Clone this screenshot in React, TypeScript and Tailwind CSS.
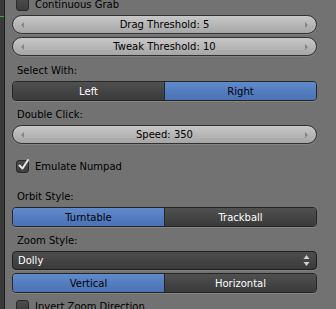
import React from 'react'

const FONT = "font-['DejaVu_Sans','Liberation_Sans',sans-serif]"

function Arrow({ dir }: { dir: 'l' | 'r' }) {
  return dir === 'l' ? (
    <div className="w-0 h-0 border-y-[3px] border-y-transparent border-r-[3px] border-r-[#858585]" />
  ) : (
    <div className="w-0 h-0 border-y-[3px] border-y-transparent border-l-[3px] border-l-[#858585]" />
  )
}

function Slider({ label, className = '' }: { label: string; className?: string }) {
  return (
    <div
      className={`shrink-0 h-[19px] flex items-center px-[8px] rounded-full border border-[#303030] bg-gradient-to-b from-[#c8c8c8] to-[#a6a6a6] shadow-[0_1px_0_rgba(255,255,255,0.12)] text-black ${className}`}
    >
      <Arrow dir="l" />
      <span className="flex-1 text-center leading-none">{label}</span>
      <Arrow dir="r" />
    </div>
  )
}

function Label({ text, className = '' }: { text: string; className?: string }) {
  return (
    <div className={`shrink-0 h-[20px] flex items-center pl-[5px] text-black ${className}`}>{text}</div>
  )
}

function Check({ checked }: { checked?: boolean }) {
  return (
    <div className="relative w-[13px] h-[13px] rounded-[3px] border border-[#2a2a2a] bg-gradient-to-b from-[#4c4c4c] to-[#3c3c3c]">
      {checked && (
        <svg className="absolute left-[1px] top-[-3px]" width="12" height="13" viewBox="0 0 12 13">
          <path d="M1.5 7.5 L4.5 10.5 L10 2" fill="none" stroke="#e6e6e6" strokeWidth="2" strokeLinecap="round" strokeLinejoin="round" />
        </svg>
      )}
    </div>
  )
}

function CheckRow({ label, checked, className = '' }: { label: string; checked?: boolean; className?: string }) {
  return (
    <div className={`shrink-0 h-[20px] flex items-center gap-[6px] pl-[4px] text-black ${className}`}>
      <Check checked={checked} />
      <span>{label}</span>
    </div>
  )
}

function Toggle({ left, right, active, className = '' }: { left: string; right: string; active: 0 | 1; className?: string }) {
  const on = 'bg-gradient-to-b from-[#5f8acb] to-[#4a72b5] text-black'
  const off = 'bg-gradient-to-b from-[#505050] to-[#3a3a3a] text-white'
  return (
    <div className={`shrink-0 h-[20px] flex rounded-[4px] border border-[#262626] overflow-hidden shadow-[0_1px_0_rgba(255,255,255,0.12)] ${className}`}>
      <div className={`flex-1 flex items-center justify-center border-r border-[#262626] ${active === 0 ? on : off}`}>{left}</div>
      <div className={`flex-1 flex items-center justify-center ${active === 1 ? on : off}`}>{right}</div>
    </div>
  )
}

function Dropdown({ value, className = '' }: { value: string; className?: string }) {
  return (
    <div className={`shrink-0 h-[19px] flex items-center pl-[5px] pr-[6px] rounded-[4px] border border-[#1e1e1e] bg-gradient-to-b from-[#4e4e4e] to-[#3a3a3a] text-white shadow-[0_1px_0_rgba(255,255,255,0.12)] ${className}`}>
      <span className="flex-1">{value}</span>
      <svg width="7" height="13" viewBox="0 0 7 13">
        <path d="M0.5 5 L3.5 1 L6.5 5 Z" fill="#d2d2d2" />
        <path d="M0.5 8 L3.5 12 L6.5 8 Z" fill="#d2d2d2" />
      </svg>
    </div>
  )
}

export default function App() {
  return (
    <div className={`w-[336px] h-[309px] overflow-hidden flex bg-[#727272] text-[10px] ${FONT}`}>
      {/* editor edge on the left */}
      <div className="w-[5px] flex flex-col bg-[#3a3a3a] border-r border-[#1c1c1c]">
        <div className="h-[16px]" />
        <div className="h-[1px] bg-[#3fa64a]" />
      </div>

      <div className="flex-1 pl-[7px] pr-[19px] flex flex-col">
        <CheckRow label="Continuous Grab" className="mt-[-6px]" />
        <Slider label="Drag Threshold: 5" className="mt-[1px]" />
        <Slider label="Tweak Threshold: 10" className="mt-[3px]" />

        <Label text="Select With:" className="mt-[4px]" />
        <Toggle left="Left" right="Right" active={1} className="mt-[1px]" />

        <Label text="Double Click:" className="mt-[3px]" />
        <Slider label="Speed: 350" className="mt-[1px]" />

        <CheckRow label="Emulate Numpad" checked className="mt-[12px]" />

        <Label text="Orbit Style:" className="mt-[10px]" />
        <Toggle left="Turntable" right="Trackball" active={0} className="mt-[1px]" />

        <Label text="Zoom Style:" className="mt-[3px]" />
        <Dropdown value="Dolly" className="mt-[1px]" />
        <Toggle left="Vertical" right="Horizontal" active={0} className="mt-[3px]" />

        <CheckRow label="Invert Zoom Direction" className="mt-[3px]" />
      </div>
    </div>
  )
}
